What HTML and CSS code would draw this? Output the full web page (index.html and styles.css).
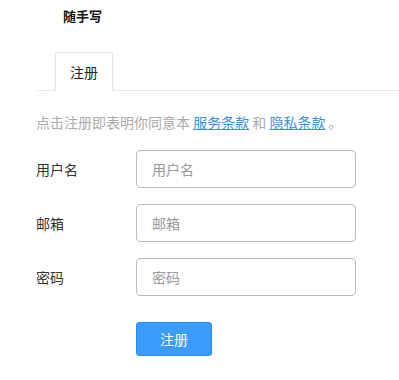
FILE: index.html
```html
<!DOCTYPE html>
<html lang="zh-CN">
<head>
<meta charset="utf-8">
<title>随手写</title>
<link rel="stylesheet" href="styles.css">
</head>
<body>
<header class="header">随手写</header>
<nav class="tabs">
  <div class="tab active">注册</div>
</nav>
<main class="content">
  <p class="notice">点击注册即表明你同意本 <a href="#" class="link">服务条款</a> 和 <a href="#" class="link">隐私条款</a> 。</p>
  <form class="form">
    <div class="row">
      <label class="label">用户名</label>
      <input class="input" type="text" placeholder="用户名">
    </div>
    <div class="row">
      <label class="label">邮箱</label>
      <input class="input" type="text" placeholder="邮箱">
    </div>
    <div class="row">
      <label class="label">密码</label>
      <input class="input" type="password" placeholder="密码">
    </div>
    <div class="row actions">
      <button class="btn" type="button">注册</button>
    </div>
  </form>
</main>
</body>
</html>
```
FILE: styles.css
```css
* { box-sizing: border-box; }
body {
  margin: 0;
  background: #fff;
  font-family: "Noto Sans CJK SC", "Noto Sans", sans-serif;
  color: #333;
  font-size: 14px;
}
.header {
  height: 32px;
  line-height: 32px;
  padding-left: 63px;
  font-size: 13px;
  font-weight: bold;
  color: #111;
}
.tabs {
  margin: 20px 0 0 38px;
  height: 39px;
  border-bottom: 1px solid #e6e6e6;
  display: flex;
}
.tab {
  margin-left: 17px;
  width: 58px;
  height: 39px;
  border: 1px solid #e6e6e6;
  border-bottom: 1px solid #fff;
  border-radius: 2px 2px 0 0;
  background: #fff;
  text-align: center;
  padding-top: 2px;
  line-height: 34px;
  font-size: 14px;
  color: #222;
}
.content {
  padding-left: 36px;
}
.notice {
  margin: 21px 0 0;
  line-height: 20px;
  color: #aaa;
  font-size: 14px;
  white-space: nowrap;
}
.link {
  color: #3d8fe0;
  text-decoration: underline;
}
.form {
  margin-top: 18px;
  display: flex;
  flex-direction: column;
  gap: 16px;
}
.row {
  display: flex;
  align-items: center;
  height: 38px;
}
.label {
  width: 100px;
  color: #333;
  font-size: 14px;
}
.input {
  width: 220px;
  height: 38px;
  border: 1px solid #bbb;
  border-radius: 4px;
  padding: 0 15px;
  font-family: inherit;
  font-size: 14px;
  color: #333;
  outline: none;
}
.input::placeholder { color: #999; }
.actions {
  margin-top: 10px;
  padding-left: 100px;
  height: 34px;
}
.btn {
  width: 76px;
  height: 34px;
  border: 1px solid #2f8ae8;
  border-radius: 3px;
  background: #3a9cfc;
  color: #fff;
  font-family: inherit;
  font-size: 14px;
  cursor: pointer;
}
```
